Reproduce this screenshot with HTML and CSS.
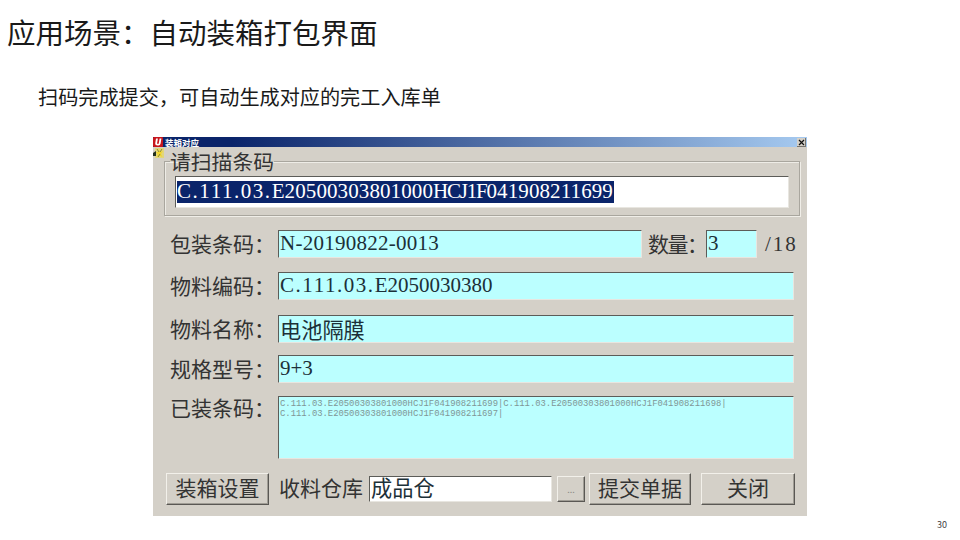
FILE: index.html
```html
<!DOCTYPE html>
<html lang="zh-CN">
<head>
<meta charset="utf-8">
<title>应用场景：自动装箱打包界面</title>
<link rel="stylesheet" href="styles.css">
</head>
<body>
<main class="slide">
  <h1 class="title">应用场景：自动装箱打包界面</h1>
  <p class="subtitle">扫码完成提交，可自动生成对应的完工入库单</p>
  <section class="dialog">
    <div class="titlebar">
      <svg class="logo" width="10" height="10" viewBox="0 0 10 10"><rect width="10" height="10" rx="1" fill="#c8161d"/><path d="M3 1.5 L2.2 6.5 Q2 8.5 4.5 8.5 L5.5 8.5 Q7.2 8.5 7.6 6.5 L8.4 1.5 H6.6 L5.8 6.3 Q5.6 7 5 7 Q4 7 4.1 6.3 L4.9 1.5 Z" fill="#fff"/></svg>
      <span class="titlebar-text">装箱对应</span>
      <span class="close"><svg width="9" height="9" viewBox="0 0 9 9"><path d="M2 2 L7 7 M7 2 L2 7" stroke="#111" stroke-width="1.2"/></svg></span>
    </div>
    <svg class="app-icon" width="11" height="11" viewBox="0 0 11 11"><rect x="2" y="0" width="9" height="10" fill="#e2d67a"/><path d="M0 5 L3 3 L3 8 L0 8 Z" fill="#22301f"/><path d="M6 1 L7 4 L10 3 L8 6 L9.5 9 L6 7.5 L4 9 L4.5 6 L3 4 L5 4 Z" fill="#f2d52e"/><path d="M4 1 L6 4 M9 1 L7 4 M5 9 L7 6" stroke="#8a8a30" stroke-width="1"/></svg>
    <fieldset class="scan">
      <legend class="scan-legend">请扫描条码</legend>
      <div class="field field-white scan-input"><span class="selected latin"><span class="dots">C.111.03.</span>E20500303801000<span class="caps">HCJ1F</span>041908211699</span></div>
    </fieldset>
    <div class="row row-first">
      <span class="label">包装条码：</span>
      <div class="field field-cyan grow latin code">N-20190822-0013</div>
      <span class="label qty-label">数量：</span>
      <div class="field field-cyan qty latin">3</div>
      <span class="total latin">/18</span>
    </div>
    <div class="row row-a">
      <span class="label">物料编码：</span>
      <div class="field field-cyan grow latin"><span class="dots">C.111.03.</span>E2050030380</div>
    </div>
    <div class="row row-b">
      <span class="label">物料名称：</span>
      <div class="field field-cyan grow cjk">电池隔膜</div>
    </div>
    <div class="row row-c">
      <span class="label">规格型号：</span>
      <div class="field field-cyan grow latin">9+3</div>
    </div>
    <div class="row row-list">
      <span class="label">已装条码：</span>
      <div class="field field-cyan grow list">C.111.03.E20500303801000HCJ1F041908211699|C.111.03.E20500303801000HCJ1F041908211698|<br>C.111.03.E20500303801000HCJ1F041908211697|</div>
    </div>
    <div class="actions">
      <button class="btn btn-setup">装箱设置</button>
      <span class="label wh-label">收料仓库</span>
      <div class="field field-white wh cjk">成品仓</div>
      <button class="btn btn-more">...</button>
      <button class="btn btn-submit">提交单据</button>
      <button class="btn btn-close">关闭</button>
    </div>
  </section>
  <footer class="page-no">30</footer>
</main>
</body>
</html>
```
FILE: styles.css
```css
* { box-sizing: border-box; }
html, body { margin: 0; padding: 0; background: #fff; }
.slide {
  width: 960px; height: 540px; overflow: hidden;
  display: flex; flex-direction: column;
  font-family: "Noto Sans CJK SC", "Noto Sans", sans-serif;
  color: #1a1a1a;
}
.title { margin: 12px 0 0 7px; font-size: 28.5px; line-height: 40px; font-weight: 400; height: 40px; }
.subtitle { margin: 31px 0 0 38px; font-size: 20.15px; line-height: 28px; height: 28px; }
.dialog {
  position: relative;
  margin: 26px 0 0 153px; width: 654px; height: 379px;
  background: #d4d0c8; flex: none;
  padding-left: 11px; color: #333;
}
.titlebar {
  margin-left: -11px; height: 10px;
  background: linear-gradient(90deg, #0a246a 0%, #0a246a 12%, #a6caf0 100%);
  display: flex; align-items: center;
  color: #fff;
}
.logo { flex: none; }
.titlebar-text { font-size: 8.5px; line-height: 10px; font-weight: 700; margin-left: 2px; }
.close {
  margin-left: auto; margin-right: 1px; width: 9px; height: 9px;
  background: #d4d0c8; display: flex;
  box-shadow: inset -1px -1px 0 #77746e;
}
.app-icon { position: absolute; left: 0; top: 11px; }
.scan {
  margin: 4px 0 0 0; padding: 0 10px; width: 636px; height: 65px;
  border: 1px solid #a9a69e; box-shadow: inset 1px 1px 0 #eeece6, 1px 1px 0 #f0eee8;
  min-width: 0;
}
.scan-legend { margin-left: -5px; padding: 0; font-size: 20.8px; line-height: 21px; height: 21px; }
.scan-input { height: 32px; margin-top: 4px; align-items: flex-start; padding-left: 1px; }
.selected { background: #0a246a; color: #fff; height: 22px; line-height: 20px; display: block; padding-right: 1px; letter-spacing: 0.1px; }
.latin { font-family: "Liberation Serif", serif; font-size: 21px; }
.dots { letter-spacing: 1.55px; }
.caps { letter-spacing: -1.2px; }
.code { letter-spacing: 0.25px; }
.cjk { font-size: 21.2px; padding-bottom: 3px; }
.field {
  display: flex; align-items: center; white-space: nowrap;
  border-top: 1px solid #5c5c58; border-left: 1px solid #5c5c58;
  border-bottom: 1px solid #e8e6e0; border-right: 1px solid #e8e6e0;
  padding-left: 1px; color: #1c3038;
}
.field-cyan { background: #bbffff; }
.field-white { background: #fff; }
.row { display: flex; align-items: center; height: 28px; padding-left: 6px; }
.row-first { margin-top: 14px; }
.row-a { margin-top: 14px; }
.row-b { margin-top: 15px; }
.row-c { margin-top: 12px; }
.row-list { margin-top: 13px; height: 63px; align-items: flex-start; }
.label { font-size: 21px; line-height: 26px; padding-bottom: 2px; white-space: nowrap; flex: none; width: 108px; }
.row-list .label { line-height: 22px; padding-bottom: 0; }
.grow { height: 28px; flex: none; width: 516px; padding-bottom: 1px; }
.row-first .grow:first-of-type { width: 364px; }
.qty-label { width: 58px; margin-left: 6px; letter-spacing: -1.5px; }
.qty { width: 51px; height: 28px; padding-bottom: 1px; }
.total { margin-left: 8px; color: #333; letter-spacing: 2px; }
.list {
  height: 63px; padding-top: 2px; padding-bottom: 0;
  font-family: "Liberation Mono", monospace; font-size: 8.87px; line-height: 10px;
  color: #7f9696; white-space: pre; display: block;
}
.actions { display: flex; align-items: center; margin-top: 14px; height: 32px; padding-left: 2px; }
.actions .label { padding-bottom: 4px; }
.actions .cjk { padding-bottom: 5px; }
.btn {
  height: 32px; padding: 0 0 4px; margin: 0;
  background: #d4d0c8; color: #333;
  border: 1px solid; border-color: #f2f0ea #5a5854 #5a5854 #f2f0ea;
  box-shadow: inset -1px -1px 0 #a09d95;
  font-family: inherit; font-size: 21px; line-height: 26px;
}
.btn-setup { width: 103px; }
.wh-label { width: 90px; margin-left: 10px; }
.wh { width: 183px; height: 26px; }
.btn-more { width: 28px; height: 26px; margin-left: 5px; font-size: 9px; color: #8a8a84; }
.btn-submit { width: 102px; margin-left: 4px; }
.btn-close { width: 94px; margin-left: 10px; }
.page-no { margin: 4px 0 0 937px; font-size: 9px; line-height: 10px; color: #444; }
```
